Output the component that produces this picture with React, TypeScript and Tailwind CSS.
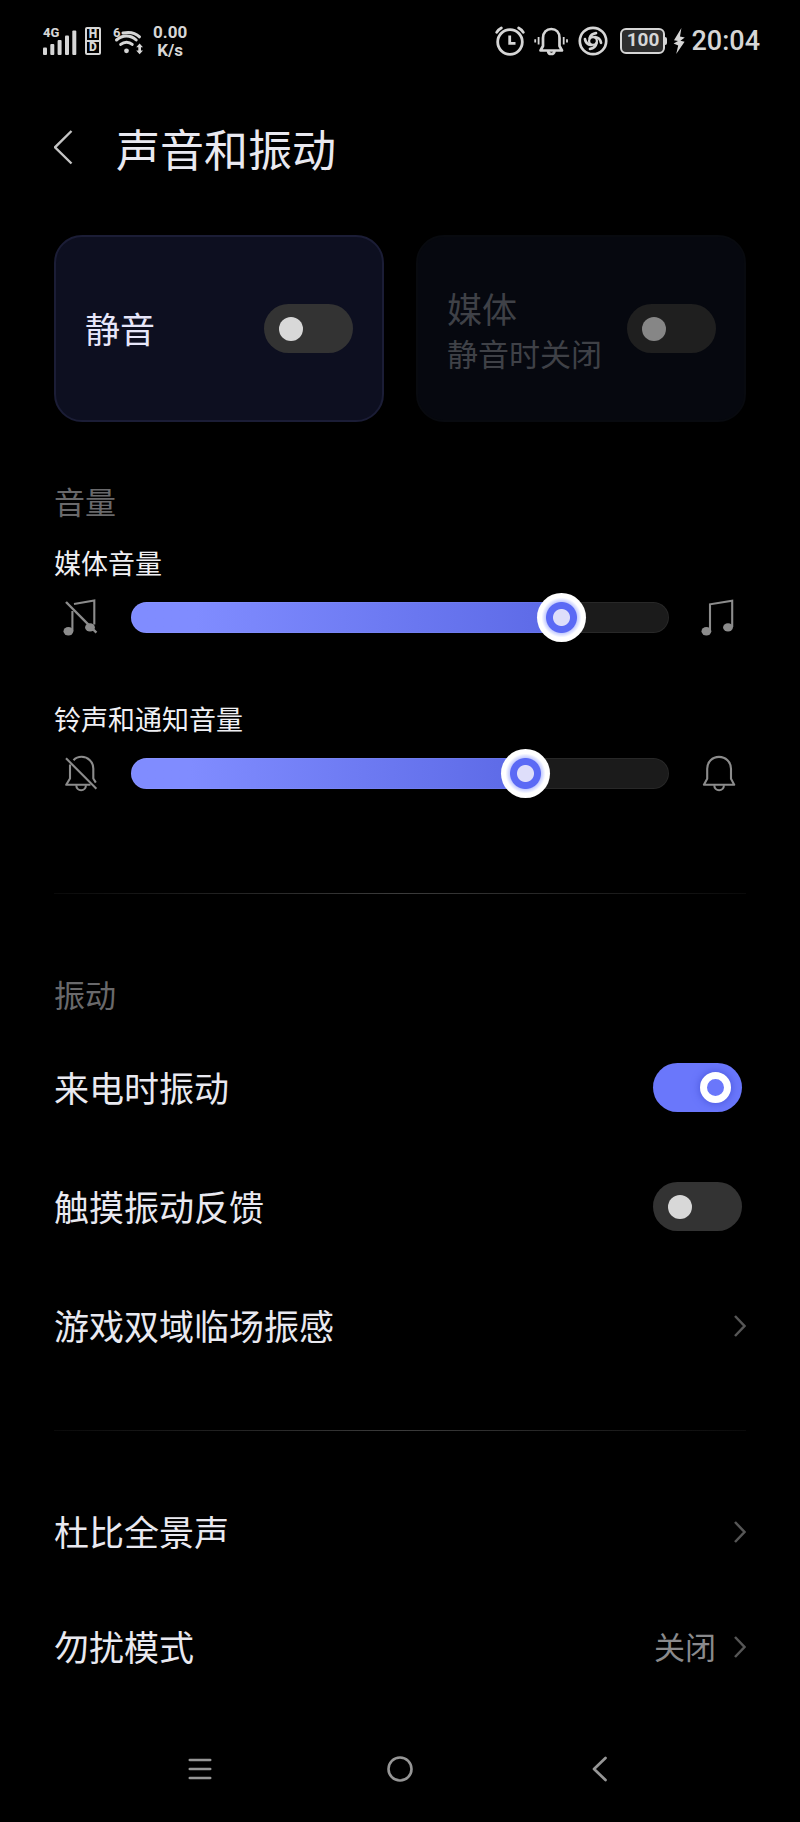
import React, { useId, useState } from 'react';

interface ToggleProps {
  id?: string;
  label: string;
  defaultChecked?: boolean;
  disabled?: boolean;
}

function Toggle({ id, label, defaultChecked = false, disabled = false }: ToggleProps) {
  return (
    <input
      id={id}
      type="checkbox"
      role="switch"
      aria-label={label}
      defaultChecked={defaultChecked}
      disabled={disabled}
      className="flex h-[49px] w-[89px] shrink-0 appearance-none items-center rounded-full bg-[#333333] pl-[15px] before:block before:size-6 before:rounded-full before:bg-[#d8d8d8] checked:bg-[#6a77fb] checked:pl-[47px] checked:before:size-[31px] checked:before:border-[7px] checked:before:border-white checked:before:bg-[#6a77fb] checked:before:shadow-[0_0_8px_#4653d8] disabled:bg-[#1f1f1f] disabled:before:bg-[#868686]"
    />
  );
}

function MusicIcon({ muted = false }: { muted?: boolean }) {
  return (
    <svg width="36" height="40" viewBox="1 0 36 40" fill="none" stroke="currentColor" strokeWidth="2.1" className="shrink-0" aria-hidden="true">
      {muted ? (
        <>
          <path d="M12 7 32.3 3.4V27.5M10.4 14V34" />
          <path d="M4 5 34.4 35.7" strokeWidth="2.4" />
        </>
      ) : (
        <path d="M10 34V7.3L32.2 3.7V30" />
      )}
      <ellipse cx="6.4" cy="34.2" rx="4.9" ry="4.2" fill="currentColor" stroke="none" />
      <ellipse cx="28" cy="30.4" rx="4.9" ry="4.2" fill="currentColor" stroke="none" />
    </svg>
  );
}

function BellIcon({ muted = false }: { muted?: boolean }) {
  return (
    <svg width="36" height="40" viewBox="1 0 36 40" fill="none" stroke="currentColor" strokeWidth="2.1" strokeLinejoin="round" className="shrink-0" aria-hidden="true">
      {muted ? (
        <>
          <path d="M11.5 7.2C13.5 5 16.3 3.8 19.6 3.8C26 3.8 31.3 8.8 31.3 15.5V25.5L33.8 29.6" />
          <path d="M8 11.5V25.5L4.2 31.8H28.5" />
          <path d="M4 5.3 34.4 35.7" />
        </>
      ) : (
        <path d="M3.9 31.7 7.2 25.7V15.7C7.2 9 12.4 3.9 19 3.9S31 9 31 15.7V25.7L34.2 31.7Z" />
      )}
      <path d="M14.3 32.2a4.8 5 0 0 0 9.6 0" />
    </svg>
  );
}

function Chevron() {
  return (
    <svg width="12" height="22" viewBox="0 0 12 22" fill="none" stroke="#565656" strokeWidth="2.5" className="shrink-0" aria-hidden="true">
      <path d="M1 1 10.5 11 1 21" />
    </svg>
  );
}

function Divider() {
  return <div className="h-px bg-linear-to-r from-[#0a0a0a] via-[#3c3c3c] to-[#0a0a0a]" />;
}

interface VolumeProps {
  label: string;
  initial: number;
  low: React.ReactNode;
  high: React.ReactNode;
}

function VolumeSlider({ label, initial, low, high }: VolumeProps) {
  const id = useId();
  const [value, setValue] = useState(initial);

  return (
    <div>
      <label htmlFor={id} className="block text-[27px] leading-9 text-[#f0f0f4]">{label}</label>
      <div className="mt-4 flex h-10 items-center gap-8 px-[9px] text-[#8c8c8c]">
        {low}
        <input
          id={id}
          type="range"
          min={0}
          max={1000}
          value={value}
          onChange={(e) => setValue(Number(e.target.value))}
          style={{ backgroundSize: `calc(25px + (100% - 49px) * ${value / 1000}) 100%` }}
          className="block h-[31px] min-w-0 flex-1 appearance-none rounded-full bg-[#1b1b1b] bg-linear-to-r from-[#808cff] from-15% to-[#5c69e6] bg-no-repeat shadow-[inset_0_0_0_1px_rgba(255,255,255,0.06)] [&::-webkit-slider-runnable-track]:h-[31px] [&::-webkit-slider-thumb]:-mt-[9px] [&::-webkit-slider-thumb]:size-[49px] [&::-webkit-slider-thumb]:appearance-none [&::-webkit-slider-thumb]:rounded-full [&::-webkit-slider-thumb]:bg-[radial-gradient(circle,#dedefa_8px,#5b6af5_9px,#5b6af5_15px,#c9d0ff_16px,#ffffff_20px)]"
        />
        {high}
      </div>
    </div>
  );
}

function LinkRow({ title, value }: { title: string; value?: string }) {
  return (
    <a href="#" className="flex h-full items-center justify-between">
      <span>{title}</span>
      <span className="flex items-center gap-[18px] text-[31px] text-[#8a8a8c]">
        {value}
        <Chevron />
      </span>
    </a>
  );
}

function SwitchRow({ title, on = false }: { title: string; on?: boolean }) {
  const id = useId();
  return (
    <div className="flex h-full items-center justify-between pr-1">
      <label htmlFor={id}>{title}</label>
      <Toggle id={id} label={title} defaultChecked={on} />
    </div>
  );
}

function StatusBar() {
  return (
    <div className="flex h-[81px] items-center justify-between pr-10 pl-[43px] font-[Roboto,sans-serif] text-[#d6d6d6]">
      <div className="flex items-center">
        <div className="relative h-7 w-[34px]">
          <svg width="34" height="28" viewBox="0 0 34 28" fill="currentColor" aria-hidden="true">
            <rect x="0" y="20.5" width="4" height="7.5" rx="1" />
            <rect x="7.3" y="17" width="4" height="11" rx="1" />
            <rect x="14.6" y="13" width="4" height="15" rx="1" />
            <rect x="22" y="8.5" width="4" height="19.5" rx="1" />
            <rect x="29.3" y="3.5" width="4" height="24.5" rx="1" />
          </svg>
          <span className="absolute top-0 left-0 text-[13px] leading-[11px] font-extrabold">4G</span>
        </div>
        <div className="ml-2 flex h-7 w-4 flex-col divide-y-2 divide-[#d6d6d6] rounded-xs border-2 border-[#d6d6d6] text-center text-[12px] leading-[11px] font-black">
          <span>H</span>
          <span>D</span>
        </div>
        <div className="relative ml-3 h-7 w-[30px]">
          <svg width="30" height="28" viewBox="0 0 30 28" fill="none" stroke="currentColor" strokeWidth="3" strokeLinecap="round" aria-hidden="true">
            <path d="M10 6C16.5 4.6 22.5 6 26.5 9.8" />
            <path d="M3.5 13C9.5 7.8 17.5 7.8 23.2 13" />
            <path d="M7.7 17.4C11.2 14.4 16 14.4 19.2 17.4" />
            <circle cx="13.5" cy="23.8" r="2.4" fill="currentColor" stroke="none" />
            <path d="M26.6 16.4 30 20.3H23.2ZM26.6 27.2 23.2 23.4H30ZM25.3 20H28V24H25.3Z" fill="currentColor" stroke="none" />
          </svg>
          <span className="absolute top-0 left-0 text-[13px] leading-[11px] font-bold">6</span>
        </div>
        <div className="ml-[10px] text-center text-[17px] leading-[18px] font-bold">
          <div>0.00</div>
          <div>K/s</div>
        </div>
      </div>

      <div className="flex items-center">
        <svg width="30" height="30" viewBox="0 0 30 30" fill="none" stroke="currentColor" strokeWidth="2.8" strokeLinecap="round" aria-hidden="true">
          <circle cx="15" cy="16" r="12.3" />
          <path d="M14.7 9.5V17.3H20.5" strokeLinecap="butt" />
          <path d="M1.7 6.3C2.7 4.4 4.3 2.9 6.3 1.9M28.3 6.3C27.3 4.4 25.7 2.9 23.7 1.9" />
        </svg>
        <svg width="34" height="30" viewBox="0 0 34 30" fill="none" stroke="currentColor" strokeWidth="2.7" strokeLinejoin="round" className="ml-[9px]" aria-hidden="true">
          <path d="M6.5 24.5 9 20V12C9 6.5 12.5 3 17.3 3S25.5 6.5 25.5 12V20L28 24.5Z" />
          <path d="M14 25C14.5 29 20 29 20.6 25" />
          <path d="M4.6 11V18.5M1.2 13.2V16.6M29.7 11V18.5M33 13.2V16.6" strokeWidth="1.8" />
        </svg>
        <svg width="30" height="30" viewBox="0 0 30 30" fill="none" stroke="currentColor" strokeWidth="2.7" strokeLinecap="round" className="ml-[10px]" aria-hidden="true">
          <circle cx="15" cy="15" r="13.2" />
          <circle cx="15" cy="15" r="3.9" strokeWidth="2.3" />
          <path d="M11.6 12.2C12.6 9.2 14.8 7.6 18 7.2" />
          <path d="M17 11C20.3 11.3 22.4 13.4 23 16.8" />
          <path d="M18.6 17C17.8 20.6 15.6 22.4 12 22.8" />
          <path d="M13 19C9.8 18.6 7.6 16.6 7 13.2" />
        </svg>
        <div className="ml-3 flex items-center">
          <span className="flex h-[26px] w-[45px] items-center justify-center rounded-md border-2 border-[#d6d6d6] bg-[#2e2e2e] text-[19px] font-bold">100</span>
          <span className="h-2 w-0.5 rounded-r-xs bg-[#d6d6d6]" />
        </div>
        <svg width="12" height="26" viewBox="0 0 12 26" fill="currentColor" className="ml-[6px]" aria-hidden="true">
          <path d="M8.4 0 1 12.2 5 13 0.6 15.6 5.2 17.4 3.2 26 11.6 13.8 7.4 12.8 11.8 9.6 7 8.6Z" />
        </svg>
        <span className="ml-[6px] text-[27px] leading-8 font-medium">20:04</span>
      </div>
    </div>
  );
}

export default function App() {
  return (
    <div className="min-h-screen bg-black font-['Noto_Sans_CJK_SC',sans-serif] text-[#e9e9f0]" lang="zh-CN">
      <StatusBar />

      <main className="px-[54px]">
        <header className="mb-5 flex h-[134px] items-center gap-[42px]">
          <button type="button" aria-label="返回">
            <svg width="20" height="36" viewBox="0 0 20 36" fill="none" stroke="#c4c4c4" strokeWidth="2.4" aria-hidden="true">
              <path d="M17.5 1 1 17.3 17.5 33.5" />
            </svg>
          </button>
          <h1 className="text-[44px] leading-[60px]">声音和振动</h1>
        </header>

        <section className="grid grid-cols-2 gap-8 text-[35px]">
          <div className="flex h-[187px] items-center justify-between rounded-[28px] border-2 border-[#1b1d36] bg-[#0d0f20] px-[29px] text-[#e6e6fa]">
            <label htmlFor="mute">静音</label>
            <Toggle id="mute" label="静音" />
          </div>
          <div className="flex h-[187px] items-center justify-between rounded-[28px] border-2 border-[#080a0f] bg-[#06080f] pr-7 pl-[29px] text-[#3f4147]">
            <label htmlFor="media" className="whitespace-nowrap">
              <span className="block leading-[48px]">媒体</span>
              <span className="block text-[31px] leading-[42px]">静音时关闭</span>
            </label>
            <Toggle id="media" label="媒体" disabled />
          </div>
        </section>

        <section className="mt-[59px]">
          <h2 className="text-[31px] leading-10 text-[#69696b]">音量</h2>
          <div className="mt-6 mb-[100px] flex flex-col gap-16">
            <VolumeSlider label="媒体音量" initial={830} low={<MusicIcon muted />} high={<MusicIcon />} />
            <VolumeSlider label="铃声和通知音量" initial={757} low={<BellIcon muted />} high={<BellIcon />} />
          </div>
        </section>

        <Divider />

        <section className="mt-20 mb-[45px]">
          <h2 className="text-[31px] leading-10 text-[#69696b]">振动</h2>
          <ul className="mt-[14px] grid auto-rows-[119px] text-[35px]">
            <li><SwitchRow title="来电时振动" on /></li>
            <li><SwitchRow title="触摸振动反馈" /></li>
            <li><LinkRow title="游戏双域临场振感" /></li>
          </ul>
        </section>

        <Divider />

        <ul className="mt-[43px] grid auto-rows-[115px] text-[35px]">
          <li><LinkRow title="杜比全景声" /></li>
          <li><LinkRow title="勿扰模式" value="关闭" /></li>
        </ul>
      </main>

      <nav className="mt-[11px] grid h-[107px] grid-cols-3 place-items-center px-[12.5%] text-[#969696]">
        <button type="button" aria-label="最近任务">
          <svg width="24" height="24" viewBox="0 0 24 24" fill="none" stroke="currentColor" strokeWidth="2.6" strokeLinecap="round" aria-hidden="true">
            <path d="M1.8 3H22.2M1.8 12H22.2M1.8 21H22.2" />
          </svg>
        </button>
        <button type="button" aria-label="主屏幕">
          <svg width="26" height="26" viewBox="0 0 26 26" fill="none" stroke="currentColor" strokeWidth="2.6" aria-hidden="true">
            <circle cx="13" cy="13" r="11.5" />
          </svg>
        </button>
        <button type="button" aria-label="返回">
          <svg width="16" height="26" viewBox="0 0 16 26" fill="none" stroke="currentColor" strokeWidth="2.7" strokeLinecap="round" strokeLinejoin="round" aria-hidden="true">
            <path d="M13.5 2 2 13 13.5 24" />
          </svg>
        </button>
      </nav>
    </div>
  );
}
